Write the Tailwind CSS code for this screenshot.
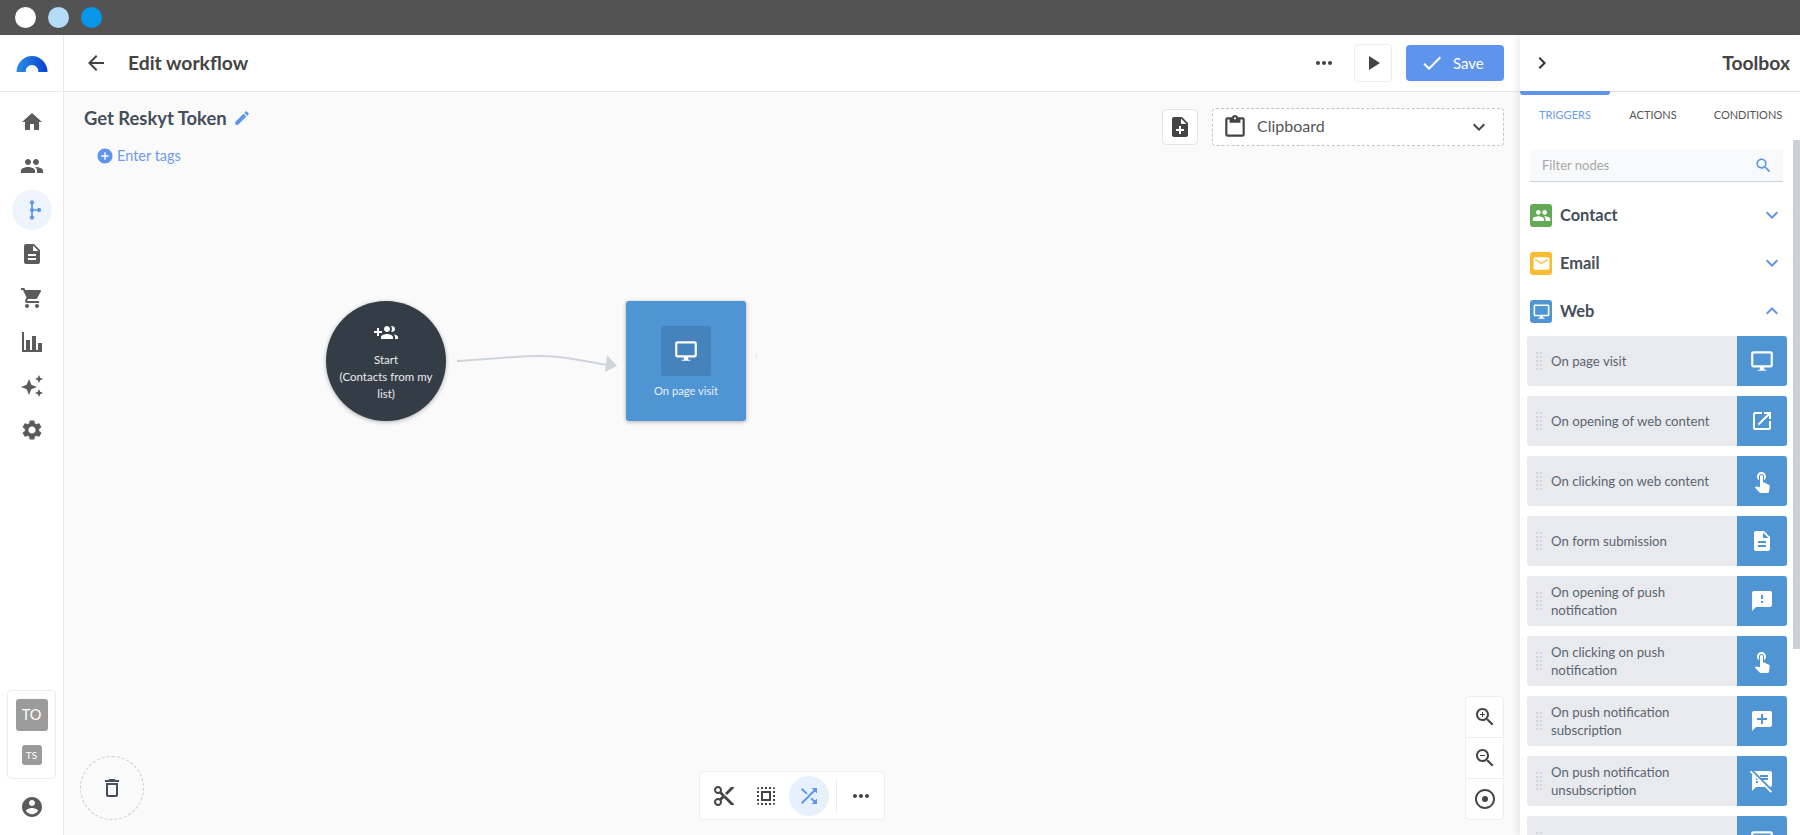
<!DOCTYPE html>
<html lang="en">
<head>
  <meta charset="UTF-8" />
  <title>Edit workflow</title>
  <meta name="viewport" content="width=device-width, initial-scale=1.0"/>
  <script src="https://cdn.jsdelivr.net/npm/@tailwindcss/browser@4"></script>
</head>
<body class="h-screen overflow-hidden flex flex-col bg-white font-['Lato','Noto_Sans',sans-serif] text-[#444]">

  <!-- shared icons -->
  <svg class="hidden">
    <symbol id="i-people" viewBox="0 0 24 24"><path d="M16 11c1.66 0 2.99-1.34 2.99-3S17.66 5 16 5c-1.66 0-3 1.34-3 3s1.34 3 3 3zm-8 0c1.66 0 2.99-1.34 2.99-3S9.66 5 8 5C6.34 5 5 6.34 5 8s1.34 3 3 3zm0 2c-2.33 0-7 1.17-7 3.5V19h14v-2.5c0-2.33-4.67-3.5-7-3.5zm8 0c-.29 0-.62.02-.97.05 1.16.84 1.97 1.97 1.97 3.45V19h6v-2.5c0-2.33-4.67-3.5-7-3.5z"/></symbol>
    <symbol id="i-doc" viewBox="0 0 24 24"><path d="M14 2H6c-1.1 0-1.99.9-1.99 2L4 20c0 1.1.89 2 1.99 2H18c1.1 0 2-.9 2-2V8l-6-6zm2 16H8v-2h8v2zm0-4H8v-2h8v2zm-3-5V3.5L18.5 9H13z"/></symbol>
    <symbol id="i-more" viewBox="0 0 24 24"><path d="M6 10c-1.1 0-2 .9-2 2s.9 2 2 2 2-.9 2-2-.9-2-2-2zm12 0c-1.1 0-2 .9-2 2s.9 2 2 2 2-.9 2-2-.9-2-2-2zm-6 0c-1.1 0-2 .9-2 2s.9 2 2 2 2-.9 2-2-.9-2-2-2z"/></symbol>
    <symbol id="i-down" viewBox="0 0 24 24"><path d="M16.59 8.59L12 13.17 7.41 8.59 6 10l6 6 6-6z"/></symbol>
    <symbol id="i-desktop" viewBox="0 0 24 24"><path d="M20 3H4c-1.1 0-2 .9-2 2v11c0 1.1.9 2 2 2h6v2H8v1h8v-1h-2v-2h6c1.1 0 2-.9 2-2V5c0-1.1-.9-2-2-2zm0 13H4V5h16v11z"/></symbol>
    <symbol id="i-touch" viewBox="0 0 24 24"><path d="M9 11.24V7.5C9 6.12 10.12 5 11.5 5S14 6.12 14 7.5v3.74c1.21-.81 2-2.18 2-3.74C16 5.01 13.99 3 11.5 3S7 5.01 7 7.5c0 1.56.79 2.93 2 3.74zm9.84 4.63l-4.54-2.26c-.17-.07-.35-.11-.54-.11H13v-6c0-.83-.67-1.5-1.5-1.5S10 6.67 10 7.5v10.74l-3.43-.72c-.08-.01-.15-.03-.24-.03-.31 0-.59.13-.79.33l-.79.8 4.94 4.94c.27.27.65.44 1.06.44h6.79c.75 0 1.33-.55 1.44-1.28l.75-5.27c.01-.07.02-.14.02-.2 0-.62-.38-1.16-.91-1.38z"/></symbol>
    <symbol id="i-grip" viewBox="0 0 6 18"><path d="M0 0h2v2H0zM4 0h2v2H4zM0 4h2v2H0zM4 4h2v2H4zM0 8h2v2H0zM4 8h2v2H4zM0 12h2v2H0zM4 12h2v2H4zM0 16h2v2H0zM4 16h2v2H4z"/></symbol>
  </svg>

  <!-- window bar -->
  <div class="h-[35px] shrink-0 bg-[#535353] flex items-center gap-[12px] pl-[15px]">
    <div class="w-[21px] h-[21px] rounded-full bg-white"></div>
    <div class="w-[21px] h-[21px] rounded-full bg-[#b3ddf7]"></div>
    <div class="w-[21px] h-[21px] rounded-full bg-[#0796ea]"></div>
  </div>

  <div class="flex-1 flex min-h-0">

    <!-- sidebar -->
    <aside class="w-[64px] shrink-0 border-r border-[#e8e8e8] flex flex-col items-center fill-[#5b5b5b]">
      <div class="h-[57px] w-full shrink-0 border-b border-[#e8e8e8] flex items-center justify-center">
        <svg class="w-[32px] h-[17px] mt-[1px]" viewBox="0 0 32 17">
          <defs><linearGradient id="logo" x1="0" x2="1" y1="0" y2="0"><stop offset="0" stop-color="#2a8fe6"/><stop offset="1" stop-color="#0a3fd0"/></linearGradient></defs>
          <path d="M0.5 17A15.5 16 0 0 1 31.5 17H22.5A6.5 7 0 0 0 9.5 17z" fill="url(#logo)"/>
        </svg>
      </div>
      <nav class="flex flex-col items-center pt-[8px]">
        <div class="w-[40px] h-[44px] flex items-center justify-center"><svg class="w-[24px] h-[24px]" viewBox="0 0 24 24"><path d="M10 20v-6h4v6h5v-8h3L12 3 2 12h3v8z"/></svg></div>
        <div class="w-[40px] h-[44px] flex items-center justify-center"><svg class="w-[24px] h-[24px]"><use href="#i-people"/></svg></div>
        <div class="w-[40px] h-[44px] flex items-center justify-center"><div class="w-[40px] h-[40px] rounded-full bg-[#eef4fd] flex items-center justify-center">
          <svg class="w-[24px] h-[24px]" viewBox="0 0 24 24"><g fill="#5e94ec" stroke="#5e94ec"><path d="M12 4v16M12 12h7" fill="none" stroke-width="1.7"/><circle cx="12" cy="4.5" r="1.7"/><circle cx="12" cy="12" r="1.7"/><circle cx="12" cy="19.5" r="1.7"/><circle cx="19" cy="12" r="1.7"/></g></svg>
        </div></div>
        <div class="w-[40px] h-[44px] flex items-center justify-center"><svg class="w-[24px] h-[24px]"><use href="#i-doc"/></svg></div>
        <div class="w-[40px] h-[44px] flex items-center justify-center"><svg class="w-[24px] h-[24px]" viewBox="0 0 24 24"><path d="M7 18c-1.1 0-1.99.9-1.99 2S5.9 22 7 22s2-.9 2-2-.9-2-2-2zM1 2v2h2l3.6 7.59-1.35 2.45c-.16.28-.25.61-.25.96 0 1.1.9 2 2 2h12v-2H7.42c-.14 0-.25-.11-.25-.25l.03-.12.9-1.63h7.45c.75 0 1.41-.41 1.75-1.03l3.58-6.49c.08-.14.12-.31.12-.48 0-.55-.45-1-1-1H5.21l-.94-2H1zm16 16c-1.1 0-1.99.9-1.99 2s.89 2 1.99 2 2-.9 2-2-.9-2-2-2z"/></svg></div>
        <div class="w-[40px] h-[44px] flex items-center justify-center"><svg class="w-[24px] h-[24px]" viewBox="0 0 24 24"><path d="M2 2h2v18h18v2H2zM6 10h4v10H6zM12 6h4v14h-4zM18 13h4v7h-4z"/></svg></div>
        <div class="w-[40px] h-[44px] flex items-center justify-center"><svg class="w-[24px] h-[24px]" viewBox="0 0 24 24"><path d="M9 5l2.3 5.7L17 13l-5.7 2.3L9 21l-2.3-5.7L1 13l5.7-2.3zM19 1l1.2 2.8L23 5l-2.8 1.2L19 9l-1.2-2.8L15 5l2.8-1.2zM19 15l1.2 2.8L23 19l-2.8 1.2L19 23l-1.2-2.8L15 19l2.8-1.2z"/></svg></div>
        <div class="w-[40px] h-[44px] flex items-center justify-center"><svg class="w-[24px] h-[24px]" viewBox="0 0 24 24"><path d="M19.14 12.94c.04-.3.06-.61.06-.94 0-.32-.02-.64-.07-.94l2.03-1.58c.18-.14.23-.41.12-.61l-1.92-3.32c-.12-.22-.37-.29-.59-.22l-2.39.96c-.5-.38-1.03-.7-1.62-.94l-.36-2.54c-.04-.24-.24-.41-.48-.41h-3.84c-.24 0-.43.17-.47.41l-.36 2.54c-.59.24-1.13.57-1.62.94l-2.39-.96c-.22-.08-.47 0-.59.22L2.74 8.87c-.12.21-.08.47.12.61l2.03 1.58c-.05.3-.09.63-.09.94s.02.64.07.94l-2.03 1.58c-.18.14-.23.41-.12.61l1.92 3.32c.12.22.37.29.59.22l2.39-.96c.5.38 1.03.7 1.62.94l.36 2.54c.05.24.24.41.48.41h3.84c.24 0 .44-.17.47-.41l.36-2.54c.59-.24 1.13-.56 1.62-.94l2.39.96c.22.08.47 0 .59-.22l1.92-3.32c.12-.22.07-.47-.12-.61l-2.01-1.58zM12 15.6c-1.98 0-3.6-1.62-3.6-3.6s1.62-3.6 3.6-3.6 3.6 1.62 3.6 3.6-1.62 3.6-3.6 3.6z"/></svg></div>
      </nav>
      <div class="mt-auto w-[49px] h-[89px] border border-[#ececec] rounded-[4px] flex flex-col items-center pt-[8px] text-white">
        <div class="w-[32px] h-[32px] rounded-[3px] bg-[#9b9b9b] flex items-center justify-center text-[14.5px]">TO</div>
        <div class="w-[20px] h-[20px] rounded-[3px] bg-[#9b9b9b] flex items-center justify-center text-[10px] mt-[14px]">TS</div>
      </div>
      <div class="h-[56px] flex items-center"><svg class="w-[24px] h-[24px]" viewBox="0 0 24 24"><path d="M12 2C6.48 2 2 6.48 2 12s4.48 10 10 10 10-4.48 10-10S17.52 2 12 2zm0 3c1.66 0 3 1.34 3 3s-1.34 3-3 3-3-1.34-3-3 1.34-3 3-3zm0 14.2c-2.5 0-4.71-1.28-6-3.22.03-1.99 4-3.08 6-3.08 1.99 0 5.97 1.09 6 3.08-1.29 1.94-3.5 3.22-6 3.22z"/></svg></div>
    </aside>

    <!-- main -->
    <main class="flex-1 min-w-0 flex flex-col">
      <header class="h-[57px] shrink-0 border-b border-[#e8e8e8] flex items-center pl-[20px] pr-[16px] fill-[#444]">
        <svg class="w-[24px] h-[24px]" viewBox="0 0 24 24"><path d="M20 11H7.83l5.59-5.59L12 4l-8 8 8 8 1.41-1.41L7.83 13H20v-2z"/></svg>
        <h1 class="ml-[20px] text-[19.3px] font-bold text-[#444]">Edit workflow</h1>
        <svg class="ml-auto w-[24px] h-[24px]"><use href="#i-more"/></svg>
        <div class="ml-[18px] w-[38px] h-[38px] border border-[#ececec] rounded-[4px] flex items-center justify-center"><svg class="w-[24px] h-[24px]" viewBox="0 0 24 24"><path d="M8 5v14l11-7z"/></svg></div>
        <button class="ml-[14px] w-[98px] h-[36px] rounded-[4px] bg-[#5e94ec] text-white text-[15px] flex items-center pl-[14px] gap-[9px]"><svg class="w-[24px] h-[24px] fill-white" viewBox="0 0 24 24"><path d="M9 16.17L4.83 12l-1.42 1.41L9 19 21 7l-1.41-1.41z"/></svg>Save</button>
      </header>

      <section class="relative flex-1 min-h-0 bg-[#fafafa] fill-[#444]">
        <div class="pl-[20px] pt-[12px]">
          <div class="flex items-center gap-[6px]">
            <h2 class="text-[18.4px] font-bold text-[#434e5a] leading-[28px]">Get Reskyt Token</h2>
            <svg class="w-[18px] h-[18px] fill-[#5e94ec]" viewBox="0 0 24 24"><path d="M3 17.25V21h3.75L17.81 9.94l-3.75-3.75L3 17.25zM20.71 7.04c.39-.39.39-1.02 0-1.41l-2.34-2.34c-.39-.39-1.02-.39-1.41 0l-1.83 1.83 3.75 3.75 1.83-1.83z"/></svg>
          </div>
          <div class="flex items-center gap-[3px] ml-[12px] mt-[13px] text-[14.5px] text-[#6c9bec]">
            <svg class="w-[18px] h-[18px] fill-[#5e94ec]" viewBox="0 0 24 24"><path d="M12 2C6.48 2 2 6.48 2 12s4.48 10 10 10 10-4.48 10-10S17.52 2 12 2zm5 11h-4v4h-2v-4H7v-2h4V7h2v4h4v2z"/></svg>
            Enter tags
          </div>
        </div>

        <!-- clipboard -->
        <div class="absolute top-[16px] right-[16px] flex items-center gap-[14px]">
          <div class="w-[36px] h-[36px] bg-white border border-[#e4e4e4] rounded-[4px] flex items-center justify-center"><svg class="w-[24px] h-[24px]" viewBox="0 0 24 24"><path d="M14 2H6c-1.1 0-1.99.9-1.99 2L4 20c0 1.1.89 2 1.99 2H18c1.1 0 2-.9 2-2V8l-6-6zm2 14h-3v3h-2v-3H8v-2h3v-3h2v3h3v2zm-3-7V3.5L18.5 9H13z"/></svg></div>
          <div class="w-[292px] h-[38px] bg-white border border-dashed border-[#c4c4c4] rounded-[4px] flex items-center pl-[9px] pr-[12px] text-[16px] text-[#555]">
            <svg class="w-[26px] h-[26px]" viewBox="0 0 24 24"><path d="M19 3h-4.18C14.4 1.84 13.3 1 12 1c-1.3 0-2.4.84-2.82 2H5c-1.1 0-2 .9-2 2v14c0 1.1.9 2 2 2h14c1.1 0 2-.9 2-2V5c0-1.1-.9-2-2-2zm-7 0c.55 0 1 .45 1 1s-.45 1-1 1-1-.45-1-1 .45-1 1-1zm7 16H5V5h2v3h10V5h2v14z"/></svg>
            <span class="ml-[9px] mb-[2px]">Clipboard</span>
            <svg class="ml-auto w-[24px] h-[24px]"><use href="#i-down"/></svg>
          </div>
        </div>

        <!-- diagram -->
        <div class="absolute left-[262px] top-[209px] w-[120px] h-[120px] rounded-full bg-[#343c46] shadow-[0_1px_4px_rgba(0,0,0,0.3)] flex flex-col items-center pt-[20px] text-white/90 text-[11.5px] leading-[17px] text-center">
          <svg class="w-[24px] h-[24px] fill-white mb-[6px]" viewBox="0 0 24 24"><path d="M8 10H5V7H3v3H0v2h3v3h2v-3h3v-2zm10 1c1.66 0 2.99-1.34 2.99-3S19.66 5 18 5c-.32 0-.63.05-.91.14.57.81.9 1.79.9 2.86s-.34 2.04-.9 2.86c.28.09.59.14.91.14zm-5 0c1.66 0 3-1.34 3-3s-1.34-3-3-3-3 1.34-3 3 1.34 3 3 3zm6.62 2.16c.83.73 1.38 1.66 1.38 2.84v2h3v-2c0-1.54-2.37-2.49-4.38-2.84zM13 13c-2 0-6 1-6 3v2h12v-2c0-2-4-3-6-3z"/></svg>
          <span>Start<br>(Contacts from my<br>list)</span>
        </div>
        <svg class="absolute left-[386px] top-[258px] w-[170px] h-[26px]" viewBox="0 0 170 26">
          <path d="M7 11C40 9 70 6 90 6S130 10 157 15" fill="none" stroke="#cfd4da" stroke-width="2"/>
          <path d="M157 5L167 16 155 22z" fill="#cfd4da"/>
        </svg>
        <div class="absolute left-[562px] top-[209px] w-[120px] h-[120px] rounded-[3px] bg-[#4f94d3] shadow-[0_1px_4px_rgba(0,0,0,0.3)] flex flex-col items-center pt-[25px] text-white/85 text-[11.2px]">
          <div class="w-[50px] h-[50px] rounded-[2px] bg-[#4683bd] flex items-center justify-center"><svg class="w-[26px] h-[26px] fill-white"><use href="#i-desktop"/></svg></div>
          <span class="mt-[7px]">On page visit</span>
        </div>
        <div class="absolute left-[692px] top-[263px] w-[1px] h-[3px] bg-[#ddd]"></div>

        <!-- trash -->
        <div class="absolute left-[16px] top-[664px] w-[64px] h-[64px] rounded-full border border-dashed border-[#c8c8c8] flex items-center justify-center"><svg class="w-[24px] h-[24px] fill-[#434e5a]" viewBox="0 0 24 24"><path d="M6 19c0 1.1.9 2 2 2h8c1.1 0 2-.9 2-2V7H6v12zM8 9h8v10H8V9zm7.5-5l-1-1h-5l-1 1H5v2h14V4z"/></svg></div>

        <!-- bottom tools -->
        <div class="absolute left-[635px] top-[679px] w-[186px] h-[49px] bg-white border border-[#eeeeee] rounded-[4px] flex items-center pl-[12px]">
          <svg class="w-[24px] h-[24px]" viewBox="0 0 24 24"><path d="M9.64 7.64c.23-.5.36-1.05.36-1.64 0-2.21-1.79-4-4-4S2 3.79 2 6s1.79 4 4 4c.59 0 1.14-.13 1.64-.36L10 12l-2.36 2.36C7.14 14.13 6.59 14 6 14c-2.21 0-4 1.79-4 4s1.79 4 4 4 4-1.79 4-4c0-.59-.13-1.14-.36-1.64L12 14l7 7h3v-1L9.64 7.64zM6 8c-1.1 0-2-.89-2-2s.9-2 2-2 2 .89 2 2-.9 2-2 2zm0 12c-1.1 0-2-.89-2-2s.9-2 2-2 2 .89 2 2-.9 2-2 2zm6-7.5c-.28 0-.5-.22-.5-.5s.22-.5.5-.5.5.22.5.5-.22.5-.5.5zM19 3l-6 6 2 2 7-7V3z"/></svg>
          <svg class="ml-[18px] w-[24px] h-[24px]" viewBox="0 0 24 24"><path d="M3 5h2V3c-1.1 0-2 .9-2 2zm0 8h2v-2H3v2zm4 8h2v-2H7v2zM3 9h2V7H3v2zm10-6h-2v2h2V3zm6 0v2h2c0-1.1-.9-2-2-2zM5 21v-2H3c0 1.1.9 2 2 2zm-2-4h2v-2H3v2zM9 3H7v2h2V3zm2 18h2v-2h-2v2zm8-8h2v-2h-2v2zm0 8c1.1 0 2-.9 2-2h-2v2zm0-12h2V7h-2v2zm0 8h2v-2h-2v2zm-4 4h2v-2h-2v2zm0-16h2V3h-2v2zM7 17h10V7H7v10zm2-8h6v6H9V9z"/></svg>
          <div class="ml-[11px] w-[40px] h-[40px] rounded-full bg-[#e6f1fd] flex items-center justify-center"><svg class="w-[24px] h-[24px] fill-[#5e94ec]" viewBox="0 0 24 24"><path d="M10.59 9.17L5.41 4 4 5.41l5.17 5.17 1.42-1.41zM14.5 4l2.04 2.04L4 18.59 5.41 20 17.96 7.46 20 9.5V4h-5.5zm.33 9.41l-1.41 1.41 3.13 3.13L14.5 20H20v-5.5l-2.04 2.04-3.13-3.13z"/></svg></div>
          <div class="ml-[7px] w-[1px] h-[32px] bg-[#ececec]"></div>
          <svg class="ml-[12px] w-[24px] h-[24px]"><use href="#i-more"/></svg>
        </div>

        <!-- zoom -->
        <div class="absolute left-[1401px] top-[604px] w-[39px] h-[124px] bg-white border border-[#eeeeee] rounded-[4px] flex flex-col divide-y divide-[#eeeeee]">
          <div class="flex-1 flex items-center justify-center"><svg class="w-[24px] h-[24px]" viewBox="0 0 24 24"><path d="M15.5 14h-.79l-.28-.27C15.41 12.59 16 11.11 16 9.5 16 5.91 13.09 3 9.5 3S3 5.91 3 9.5 5.91 16 9.5 16c1.61 0 3.09-.59 4.23-1.57l.27.28v.79l5 4.99L20.49 19l-4.99-5zm-6 0C7.01 14 5 11.99 5 9.5S7.01 5 9.5 5 14 7.01 14 9.5 11.99 14 9.5 14zm2.5-4h-2v2H9v-2H7V9h2V7h1v2h2v1z"/></svg></div>
          <div class="flex-1 flex items-center justify-center"><svg class="w-[24px] h-[24px]" viewBox="0 0 24 24"><path d="M15.5 14h-.79l-.28-.27C15.41 12.59 16 11.11 16 9.5 16 5.91 13.09 3 9.5 3S3 5.91 3 9.5 5.91 16 9.5 16c1.61 0 3.09-.59 4.23-1.57l.27.28v.79l5 4.99L20.49 19l-4.99-5zm-6 0C7.01 14 5 11.99 5 9.5S7.01 5 9.5 5 14 7.01 14 9.5 11.99 14 9.5 14zM7 9h5v1H7z"/></svg></div>
          <div class="flex-1 flex items-center justify-center"><svg class="w-[24px] h-[24px]" viewBox="0 0 24 24"><path d="M12 9a3 3 0 1 0 0 6 3 3 0 0 0 0-6zm0-7C6.48 2 2 6.48 2 12s4.48 10 10 10 10-4.48 10-10S17.52 2 12 2zm0 18c-4.42 0-8-3.58-8-8s3.58-8 8-8 8 3.58 8 8-3.58 8-8 8z"/></svg></div>
        </div>
      </section>
    </main>

    <!-- toolbox -->
    <aside class="relative z-10 w-[280px] shrink-0 bg-white shadow-[-3px_0_6px_rgba(0,0,0,0.08)] flex flex-col min-h-0 overflow-hidden">
      <div class="h-[57px] shrink-0 border-b border-[#e0e0e0] flex items-center pl-[10px] pr-[10px] justify-between">
        <svg class="w-[24px] h-[24px] fill-[#333]" viewBox="0 0 24 24"><path d="M10 6L8.59 7.41 13.17 12l-4.58 4.59L10 18l6-6z"/></svg>
        <span class="text-[19.3px] font-bold text-[#444]">Toolbox</span>
      </div>
      <div class="absolute left-0 top-[56px] w-[90px] h-[4px] rounded-b-[3px] bg-[#5e94ec]"></div>
      <div class="h-[46px] shrink-0 flex items-center text-[11px] text-[#555]">
        <span class="w-[90px] text-center text-[#6c9bec]">TRIGGERS</span>
        <span class="w-[86px] text-center">ACTIONS</span>
        <span class="w-[104px] text-center">CONDITIONS</span>
      </div>
      <div class="absolute right-0 top-[105px] w-[7px] h-[509px] bg-[#ccd0d6]"></div>

      <div class="pl-[7px] pr-[13px] pt-[12px]">
        <div class="ml-[3px] w-[253px] h-[32px] bg-[#f8f9fa] border-b border-[#d0d3d8] flex items-center pl-[12px] pr-[10px] text-[13px] text-[#a8a8a8]">
          Filter nodes
          <svg class="ml-auto w-[19px] h-[19px] fill-[#5e94ec]" viewBox="0 0 24 24"><path d="M15.5 14h-.79l-.28-.27C15.41 12.59 16 11.11 16 9.5 16 5.91 13.09 3 9.5 3S3 5.91 3 9.5 5.91 16 9.5 16c1.61 0 3.09-.59 4.23-1.57l.27.28v.79l5 4.99L20.49 19l-4.99-5zm-6 0C7.01 14 5 11.99 5 9.5S7.01 5 9.5 5 14 7.01 14 9.5 11.99 14 9.5 14z"/></svg>
        </div>

        <div class="ml-[3px] mt-[17px] h-[32px] flex items-center text-[16.4px] font-bold text-[#434e5a]">
          <div class="w-[22px] h-[23px] rounded-[3px] bg-[#64aa55] flex items-center justify-center"><svg class="w-[19px] h-[19px] fill-white"><use href="#i-people"/></svg></div>
          <span class="ml-[8px]">Contact</span>
          <svg class="ml-auto mr-[3px] w-[24px] h-[24px] fill-[#5e94ec]"><use href="#i-down"/></svg>
        </div>
        <div class="ml-[3px] mt-[16px] h-[32px] flex items-center text-[16.4px] font-bold text-[#434e5a]">
          <div class="w-[22px] h-[23px] rounded-[3px] bg-[#fbbc33] flex items-center justify-center"><svg class="w-[19px] h-[19px] fill-white" viewBox="0 0 24 24"><path d="M20 4H4c-1.1 0-1.99.9-1.99 2L2 18c0 1.1.9 2 2 2h16c1.1 0 2-.9 2-2V6c0-1.1-.9-2-2-2zm0 4l-8 5-8-5V6l8 5 8-5v2z"/></svg></div>
          <span class="ml-[8px]">Email</span>
          <svg class="ml-auto mr-[3px] w-[24px] h-[24px] fill-[#5e94ec]"><use href="#i-down"/></svg>
        </div>
        <div class="ml-[3px] mt-[16px] h-[32px] flex items-center text-[16.4px] font-bold text-[#434e5a]">
          <div class="w-[22px] h-[23px] rounded-[3px] bg-[#4f94d3] flex items-center justify-center"><svg class="w-[19px] h-[19px] fill-white"><use href="#i-desktop"/></svg></div>
          <span class="ml-[8px]">Web</span>
          <svg class="ml-auto mr-[3px] w-[24px] h-[24px] fill-[#5e94ec]" viewBox="0 0 24 24"><path d="M12 8l-6 6 1.41 1.41L12 10.83l4.59 4.58L18 14z"/></svg>
        </div>

        <div class="mt-[9px] flex flex-col gap-[10px]">
          <div class="h-[50px] shrink-0 rounded-[3px] overflow-hidden bg-[#e8eaed] flex items-center text-[13.2px] leading-[18px] text-[#5a6570]">
            <svg class="ml-[9px] w-[6px] h-[18px] fill-[#d5d7da] shrink-0"><use href="#i-grip"/></svg>
            <span class="ml-[9px] flex-1">On page visit</span>
            <div class="w-[50px] h-full bg-[#4f94d3] flex items-center justify-center"><svg class="w-[26px] h-[26px] fill-white"><use href="#i-desktop"/></svg></div>
          </div>
          <div class="h-[50px] shrink-0 rounded-[3px] overflow-hidden bg-[#e8eaed] flex items-center text-[13.2px] leading-[18px] text-[#5a6570]">
            <svg class="ml-[9px] w-[6px] h-[18px] fill-[#d5d7da] shrink-0"><use href="#i-grip"/></svg>
            <span class="ml-[9px] flex-1">On opening of web content</span>
            <div class="w-[50px] h-full bg-[#4f94d3] flex items-center justify-center"><svg class="w-[24px] h-[24px] fill-white" viewBox="0 0 24 24"><path d="M19 19H5V5h7V3H5c-1.11 0-2 .9-2 2v14c0 1.1.89 2 2 2h14c1.1 0 2-.9 2-2v-7h-2v7zM14 3v2h3.59l-9.83 9.83 1.41 1.41L19 6.41V10h2V3h-7z"/></svg></div>
          </div>
          <div class="h-[50px] shrink-0 rounded-[3px] overflow-hidden bg-[#e8eaed] flex items-center text-[13.2px] leading-[18px] text-[#5a6570]">
            <svg class="ml-[9px] w-[6px] h-[18px] fill-[#d5d7da] shrink-0"><use href="#i-grip"/></svg>
            <span class="ml-[9px] flex-1">On clicking on web content</span>
            <div class="w-[50px] h-full bg-[#4f94d3] flex items-center justify-center"><svg class="w-[24px] h-[24px] fill-white"><use href="#i-touch"/></svg></div>
          </div>
          <div class="h-[50px] shrink-0 rounded-[3px] overflow-hidden bg-[#e8eaed] flex items-center text-[13.2px] leading-[18px] text-[#5a6570]">
            <svg class="ml-[9px] w-[6px] h-[18px] fill-[#d5d7da] shrink-0"><use href="#i-grip"/></svg>
            <span class="ml-[9px] flex-1">On form submission</span>
            <div class="w-[50px] h-full bg-[#4f94d3] flex items-center justify-center"><svg class="w-[24px] h-[24px] fill-white"><use href="#i-doc"/></svg></div>
          </div>
          <div class="h-[50px] shrink-0 rounded-[3px] overflow-hidden bg-[#e8eaed] flex items-center text-[13.2px] leading-[18px] text-[#5a6570]">
            <svg class="ml-[9px] w-[6px] h-[18px] fill-[#d5d7da] shrink-0"><use href="#i-grip"/></svg>
            <span class="ml-[9px] flex-1">On opening of push<br>notification</span>
            <div class="w-[50px] h-full bg-[#4f94d3] flex items-center justify-center"><svg class="w-[24px] h-[24px] fill-white" viewBox="0 0 24 24"><path d="M20 2H4c-1.1 0-1.99.9-1.99 2L2 22l4-4h14c1.1 0 2-.9 2-2V4c0-1.1-.9-2-2-2zm-7 12h-2v-2h2v2zm0-4h-2V6h2v4z"/></svg></div>
          </div>
          <div class="h-[50px] shrink-0 rounded-[3px] overflow-hidden bg-[#e8eaed] flex items-center text-[13.2px] leading-[18px] text-[#5a6570]">
            <svg class="ml-[9px] w-[6px] h-[18px] fill-[#d5d7da] shrink-0"><use href="#i-grip"/></svg>
            <span class="ml-[9px] flex-1">On clicking on push<br>notification</span>
            <div class="w-[50px] h-full bg-[#4f94d3] flex items-center justify-center"><svg class="w-[24px] h-[24px] fill-white"><use href="#i-touch"/></svg></div>
          </div>
          <div class="h-[50px] shrink-0 rounded-[3px] overflow-hidden bg-[#e8eaed] flex items-center text-[13.2px] leading-[18px] text-[#5a6570]">
            <svg class="ml-[9px] w-[6px] h-[18px] fill-[#d5d7da] shrink-0"><use href="#i-grip"/></svg>
            <span class="ml-[9px] flex-1">On push notification<br>subscription</span>
            <div class="w-[50px] h-full bg-[#4f94d3] flex items-center justify-center"><svg class="w-[24px] h-[24px] fill-white" viewBox="0 0 24 24"><path d="M20 2H4c-1.1 0-1.99.9-1.99 2L2 22l4-4h14c1.1 0 2-.9 2-2V4c0-1.1-.9-2-2-2zm-3 9h-4v4h-2v-4H7V9h4V5h2v4h4v2z"/></svg></div>
          </div>
          <div class="h-[50px] shrink-0 rounded-[3px] overflow-hidden bg-[#e8eaed] flex items-center text-[13.2px] leading-[18px] text-[#5a6570]">
            <svg class="ml-[9px] w-[6px] h-[18px] fill-[#d5d7da] shrink-0"><use href="#i-grip"/></svg>
            <span class="ml-[9px] flex-1">On push notification<br>unsubscription</span>
            <div class="w-[50px] h-full bg-[#4f94d3] flex items-center justify-center"><svg class="w-[24px] h-[24px] fill-white" viewBox="0 0 24 24"><path d="M10.54 11l-.54-.54L7.54 8 6 6.46 2.38 2.84 1.27 1.73 0 3l2.01 2.01L2 22l4-4h9l5.73 5.73L22 22.46 17.54 18l-7-7zM8 14H6v-2h2v2zm-2-3V9l2 2H6zm14-9H4.08L10 7.92V6h8v2h-7.92l1 1H18v2h-4.92l6.99 6.99C21.14 17.95 22 17.08 22 16V4c0-1.1-.9-2-2-2z"/></svg></div>
          </div>
          <div class="h-[50px] shrink-0 rounded-[3px] overflow-hidden bg-[#e8eaed] flex items-center text-[13.2px] leading-[18px] text-[#5a6570]">
            <svg class="ml-[9px] w-[6px] h-[18px] fill-[#d5d7da] shrink-0"><use href="#i-grip"/></svg>
            <span class="ml-[9px] flex-1"></span>
            <div class="w-[50px] h-full bg-[#4f94d3] flex items-center justify-center"><svg class="w-[26px] h-[26px] fill-white"><use href="#i-desktop"/></svg></div>
          </div>
        </div>
      </div>
    </aside>
  </div>
</body>
</html>
